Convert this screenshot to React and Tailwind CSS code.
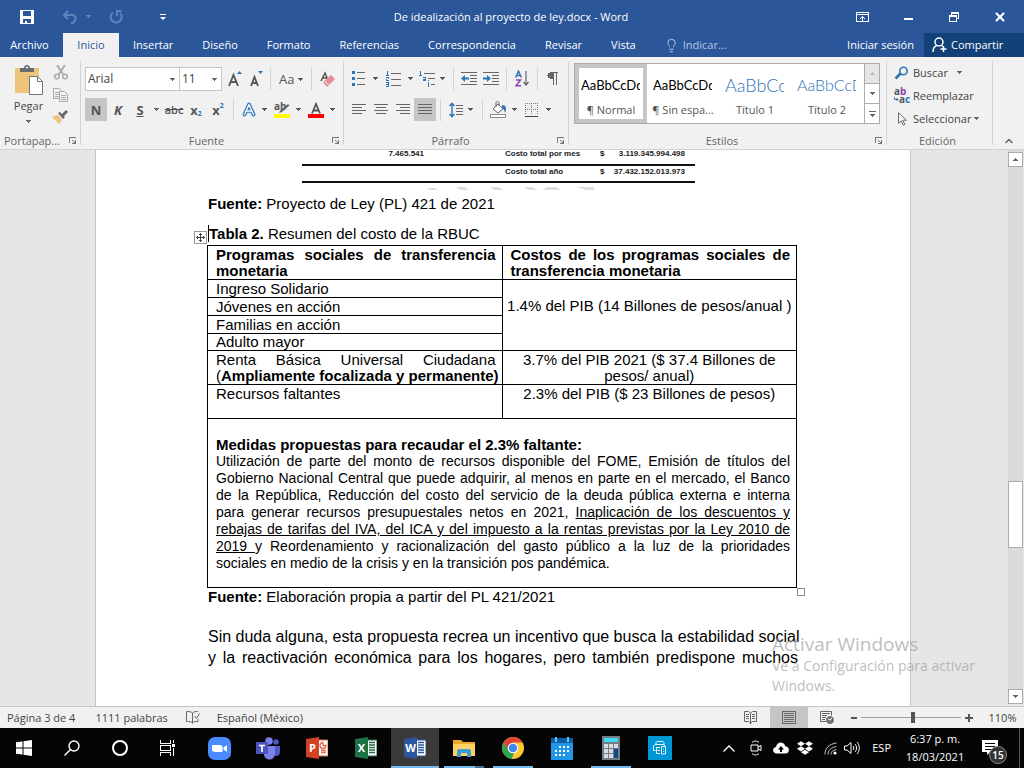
import { useState } from 'react';
import clsx from 'clsx';
import { ChevronUp, Lightbulb, X } from 'lucide-react';
import { SiDropbox } from 'react-icons/si';

const TABS = ['Insertar', 'Diseño', 'Formato', 'Referencias', 'Correspondencia', 'Revisar', 'Vista'];

const STYLES = [
  { sample: 'AaBbCcDd', name: '¶ Normal', cls: 'text-[13px] text-black' },
  { sample: 'AaBbCcDd', name: '¶ Sin espa...', cls: 'text-[13px] text-black' },
  { sample: 'AaBbCcD', name: 'Título 1', cls: 'text-[18px] font-light text-[#2e74b5]' },
  { sample: 'AaBbCcD', name: 'Título 2', cls: 'text-[16px] font-light text-[#2e74b5]' },
];

const Caret = ({ className = '' }) => (
  <svg width="5" height="3" viewBox="0 0 5 3" className={clsx('shrink-0', className)} shapeRendering="crispEdges">
    <path d="M0 0h5v1H4v1H3v1H2V2H1V1H0z" fill="currentColor" />
  </svg>
);

const Sep = ({ className = '' }) => <span className={clsx('h-[22px] w-px shrink-0 bg-[#d2d2d2]', className)} />;

const Tool = ({ label, className = '', active, children }) => (
  <button
    type="button"
    aria-label={label}
    className={clsx('flex h-[23px] shrink-0 items-center justify-center text-[#555]', active && 'bg-[#c5c5c5]', className)}
  >
    {children}
  </button>
);

const Group = ({ title, launcher = true, className = '', children }) => (
  <section className={clsx('my-1 flex shrink-0 flex-col border-r border-[#d2d2d2]', className)}>
    <div className="min-h-0 flex-1">{children}</div>
    <div className="flex h-[9px] items-center pr-1 text-[#666]">
      <span className={clsx('flex-1', title === 'Portapap...' ? 'pl-1' : 'text-center')}>{title}</span>
      {launcher && (
        <button type="button" aria-label={`Opciones de ${title}`}>
          <svg width="7" height="7" viewBox="0 0 7 7" shapeRendering="crispEdges" fill="#777">
            <path d="M0 0h7v1H1v5H0zM3 3h1v1h1v1h1V3h1v4H3V6h2V5H4V4H3z" />
          </svg>
        </button>
      )}
    </div>
  </section>
);

// rows: list of [x, width] pairs, drawn every `step` pixels
const Lines = ({ rows, step = 3 }) => (
  <svg width="14" height="12" viewBox="0 0 14 12" shapeRendering="crispEdges" fill="#666">
    {rows.map(([x, w], i) => (
      <rect key={i} x={x} y={i * step} width={w} height="1" />
    ))}
  </svg>
);

const Indent = ({ flip }) => (
  <svg width="16" height="13" viewBox="0 0 16 13">
    <path d="M0 .5h16M9 3.5h7M9 6.5h7M9 9.5h7M0 12.5h16" stroke="#666" shapeRendering="crispEdges" />
    <path
      d={flip ? 'M0 5.5h4V3l4 3.5L4 10V7.5H0z' : 'M8 5.5H4V3L0 6.5 4 10V7.5h4z'}
      fill="#2e75b6"
    />
  </svg>
);

const TitleBar = () => (
  <header className="flex h-[33px] shrink-0 items-center text-white">
    <div className="flex w-[183px] shrink-0 items-center pl-5">
      <button type="button" aria-label="Guardar">
        <svg width="14" height="14" viewBox="0 0 14 14" fill="#fff">
          <path d="M0 0h14v14H0zM3 1v5h8V1zM3 9v4h2v-2h2v2h4V9z" fillRule="evenodd" />
        </svg>
      </button>
      <button type="button" aria-label="Deshacer" className="ml-7 flex items-center text-[#5f83bd]">
        <svg width="16" height="14" viewBox="0 0 16 14" fill="none" stroke="currentColor" strokeWidth="2">
          <path d="M6 1L2 5l4 4M2 5h8c5 0 5 7-1 8" />
        </svg>
        <Caret className="ml-2" />
      </button>
      <button type="button" aria-label="Rehacer" className="ml-[18px] text-[#5f83bd]">
        <svg width="14" height="14" viewBox="0 0 14 14" fill="none" stroke="currentColor" strokeWidth="2">
          <path d="M4 2.5A5.5 5.5 0 1 0 11 3M12.5 1H8v5" />
        </svg>
      </button>
      <button type="button" aria-label="Personalizar" className="ml-[37px]">
        <svg width="6" height="6" viewBox="0 0 6 6" fill="#fff">
          <path d="M0 0h6v1H0zM0 3h6L3 6z" />
        </svg>
      </button>
    </div>
    <h1 className="flex-1 text-center">De idealización al proyecto de ley.docx - Word</h1>
    <div className="flex w-[185px] shrink-0 [&>button]:flex [&>button]:h-[30px] [&>button]:w-[46px] [&>button]:items-center [&>button]:justify-center">
      <button type="button" aria-label="Opciones de la cinta">
        <svg width="13" height="10" viewBox="0 0 13 10" fill="none" stroke="#fff" shapeRendering="crispEdges">
          <path d="M.5.5h12v9H.5zM1 2.5h11M6.5 4v5M4 6.5h1M5 5.5h1M7 5.5h1M8 6.5h1" />
        </svg>
      </button>
      <button type="button" aria-label="Minimizar">
        <span className="mt-1 h-[2px] w-[9px] bg-white" />
      </button>
      <button type="button" aria-label="Restaurar">
        <svg width="10" height="10" viewBox="0 0 10 10" fill="none" stroke="#fff" shapeRendering="crispEdges">
          <path d="M.5 3.5h7v6h-7zM0 4.5h7M2.5 3V.5h7v6H8M2 1.5h7" />
        </svg>
      </button>
      <button type="button" aria-label="Cerrar">
        <X size={14} strokeWidth={3.5} />
      </button>
    </div>
  </header>
);

const TabBar = () => (
  <nav className="flex h-6 shrink-0 text-white">
    <button type="button" className="w-[63px] pr-1">Archivo</button>
    <button type="button" className="w-14 bg-[#f1f1f1] text-[#2b579a]">Inicio</button>
    <div className="flex gap-px">
      {TABS.map((t) => (
        <button key={t} type="button" className="px-[14px]">{t}</button>
      ))}
    </div>
    <button type="button" className="ml-[14px] flex items-center gap-1 text-[#b5c7e3]">
      <Lightbulb size={15} strokeWidth={1.5} />
      Indicar...
    </button>
    <button type="button" className="mr-[10px] ml-auto">Iniciar sesión</button>
    <button type="button" className="flex w-[100px] items-center gap-1 bg-[#124078] pl-2">
      <svg width="15" height="16" viewBox="0 0 15 16" fill="none" stroke="#fff" strokeWidth="1.5">
        <circle cx="7" cy="5" r="4" />
        <path d="M1 15c0-4 2-6 4-6.5M9.5 8.5l1.5 1M11.5 9v6M8.5 12h6" />
      </svg>
      Compartir
    </button>
  </nav>
);

const Clipboard = () => (
  <Group title="Portapap..." className="w-[81px]">
    <div className="flex pt-1">
      <button type="button" className="flex w-[45px] flex-col items-center pl-3 text-[#444]">
        <svg width="30" height="31" viewBox="0 0 30 31">
          <path d="M1 3h24v25H1z" fill="#ecc57b" />
          <path d="M6 3h4c0-4 6-4 6 0h4v4H6z" fill="#6b6b6b" />
          <circle cx="13" cy="2.5" r="1" fill="#fff" />
          <path d="M15.500 11.5h8l5 5v13h-13z" fill="#fff" stroke="#777" />
          <path d="M23.5 11.5v5h5" fill="none" stroke="#777" />
        </svg>
        <span className="mt-[2px]">Pegar</span>
        <Caret className="mt-[6px] text-[#666]" />
      </button>
      <div className="flex flex-1 flex-col items-end gap-2 pr-3">
        <button type="button" aria-label="Cortar">
          <svg width="14" height="15" viewBox="0 0 14 15" fill="none" stroke="#aaa" strokeWidth="1.5">
            <path d="M3 0l6 9M11 0L5 9" strokeWidth="2" />
            <circle cx="3" cy="11.5" r="2.3" />
            <circle cx="11" cy="11.5" r="2.3" />
          </svg>
        </button>
        <button type="button" aria-label="Copiar">
          <svg width="15" height="14" viewBox="0 0 15 14" fill="#f1f1f1" stroke="#aaa">
            <path d="M.5.5h6l2 2v8h-8zM2 4.5h4M2 6.5h4M2 8.5h4" />
            <path d="M6.5 3.5h5l3 3v7h-8zM8 7.5h5M8 9.5h5M8 11.5h5" />
          </svg>
        </button>
        <button type="button" aria-label="Copiar formato">
          <svg width="16" height="14" viewBox="0 0 16 14">
            <path d="M0 7l6-2 4 5-3 4z" fill="#ecc57b" />
            <path d="M6 3l2-1 5 5-2 2zM10 4l4-4 2 2-4 4z" fill="#666" />
          </svg>
        </button>
      </div>
    </div>
  </Group>
);

const Combo = ({ label, value, options, className }) => (
  <label className={clsx('relative block h-6 border border-[#c6c6c6] bg-white', className)}>
    <select aria-label={label} defaultValue={value} className="h-full w-full appearance-none pl-[2px] text-[12px] text-[#444] outline-none">
      {options.map((o) => (
        <option key={o}>{o}</option>
      ))}
    </select>
    <Caret className="pointer-events-none absolute top-[10px] right-1 text-[#666]" />
  </label>
);

const FontGroup = () => (
  <Group title="Fuente" className="w-[263px]">
    <div className="flex items-center pt-[6px] pl-1">
      <Combo label="Fuente" value="Arial" options={['Arial', 'Calibri']} className="w-[95px]" />
      <Combo label="Tamaño" value="11" options={['10', '11', '12']} className="-ml-px w-[43px]" />
      <Tool label="Aumentar tamaño" className="ml-[6px] w-[14px]">
        <svg width="14" height="16" viewBox="0 0 14 16">
          <path d="M1 15L5.5 4 10 15M2.500 11h6" fill="none" stroke="#555" strokeWidth="1.8" />
          <path d="M9 3h5L11.5 0z" fill="#2e75b6" />
        </svg>
      </Tool>
      <Tool label="Reducir tamaño" className="ml-2 w-[14px]">
        <svg width="14" height="16" viewBox="0 0 14 16">
          <path d="M1 15L4.5 6 8 15M2.5 12h4" fill="none" stroke="#555" strokeWidth="1.8" />
          <path d="M8 0h5l-2.500 3z" fill="#2e75b6" />
        </svg>
      </Tool>
      <Sep className="ml-[6px]" />
      <Tool label="Cambiar mayúsculas" className="ml-2 gap-1">
        <span className="text-[13px]">Aa</span>
        <Caret />
      </Tool>
      <Sep className="ml-2" />
      <Tool label="Borrar formato" className="ml-2 w-4">
        <svg width="16" height="17" viewBox="0 0 16 17">
          <path d="M1 10L5 2l3 7M2.5 7h5" fill="none" stroke="#555" strokeWidth="1.5" />
          <path d="M3 11L11 4l4 4-8 8z" fill="#e8899a" />
          <path d="M4.5 9.5l4 4.5" stroke="#f1f1f1" />
        </svg>
      </Tool>
    </div>
    <div className="flex items-center pt-[7px] pl-1">
      <Tool label="Negrita" active className="w-[22px] text-[13px] font-bold">N</Tool>
      <Tool label="Cursiva" className="w-[22px] text-[13px] font-bold italic">K</Tool>
      <Tool label="Subrayado" className="w-[22px] text-[13px] font-bold underline">S</Tool>
      <Caret className="ml-[3px] text-[#666]" />
      <Tool label="Tachado" className="ml-[6px] w-[18px] font-semibold line-through">abc</Tool>
      <Tool label="Subíndice" className="ml-[3px] w-[20px] text-[13px] font-bold">
        x<span className="mt-2 text-[7px] text-[#2e75b6]">2</span>
      </Tool>
      <Tool label="Superíndice" className="ml-[2px] w-[20px] text-[13px] font-bold">
        x<span className="mb-2 text-[7px] text-[#2e75b6]">2</span>
      </Tool>
      <Sep className="ml-[5px]" />
      <Tool label="Efectos de texto" className="ml-2 gap-[6px]">
        <svg width="14" height="15" viewBox="0 0 14 15" fill="none" strokeLinejoin="round" strokeLinecap="round">
          <path d="M2.500 12.5L7 2.5l4.500 10M4.500 9h5" stroke="#9cc3e8" strokeWidth="4.500" />
          <path d="M2.500 12.5L7 2.5l4.500 10M4.500 9h5" stroke="#2e75b6" strokeWidth="3.2" />
          <path d="M2.500 12.5L7 2.5l4.500 10M4.500 9h5" stroke="#fff" strokeWidth="1.3" />
        </svg>
        <Caret />
      </Tool>
      <Tool label="Color de resaltado" className="ml-[7px] gap-[6px]">
        <svg width="16" height="16" viewBox="0 0 16 16" className="overflow-visible">
          <text x="0" y="8" fontSize="10" fontWeight="700" fill="#555" fontFamily="Open Sans, sans-serif">ab</text>
          <path d="M14 2l1.500 1.500L8 10l-3 1 1.500-3z" fill="#666" />
          <path d="M0 12h16v4H0z" fill="#ff0" />
        </svg>
        <Caret />
      </Tool>
      <Tool label="Color de fuente" className="ml-[7px] gap-[6px]">
        <svg width="16" height="16" viewBox="0 0 16 16">
          <path d="M4 11.5L8 2l4 9.5M5.500 8.500h5" fill="none" stroke="#555" strokeWidth="1.8" />
          <path d="M0 12h16v4H0z" fill="#f00" />
        </svg>
        <Caret />
      </Tool>
    </div>
  </Group>
);

const ParagraphGroup = () => (
  <Group title="Párrafo" className="w-[225px]">
    <div className="flex items-center pt-[6px] pl-2">
      <Tool label="Viñetas" className="gap-2">
        <svg width="13" height="15" viewBox="0 0 13 15" shapeRendering="crispEdges">
          <path d="M0 0h3v3H0zM0 6h3v3H0zM0 12h3v3H0z" fill="#2e75b6" />
          <path d="M5 1h8v1H5zM5 7h8v1H5zM5 13h8v1H5z" fill="#666" />
        </svg>
        <Caret />
      </Tool>
      <Tool label="Numeración" className="ml-2 gap-[7px]">
        <svg width="15" height="16" viewBox="0 0 15 16" shapeRendering="crispEdges">
          <path d="M1 0h1v4h1v1H0V4h1V1H0zM0 6h3v2H1v1h2v1H0V8h2V7H0zM0 11h3v5H0v-1h2v-1H0v-1h2v-1H0z" fill="#2e75b6" />
          <path d="M5 2h10v1H5zM5 8h10v1H5zM5 14h10v1H5z" fill="#666" />
        </svg>
        <Caret />
      </Tool>
      <Tool label="Lista multinivel" className="ml-[6px] gap-1">
        <svg width="17" height="16" viewBox="0 0 17 16" shapeRendering="crispEdges">
          <path d="M1 0h1v4h1v1H0V4h1V1H0zM4 6h3v4H4V8h2V7H4zM9 9h1v1H9zM9 11h1v5H9z" fill="#2e75b6" />
          <path d="M5 2h11v1H5zM9 7h7v1H9zM12 13h4v1h-4z" fill="#666" />
        </svg>
        <Caret />
      </Tool>
      <Sep className="ml-2" />
      <Tool label="Disminuir sangría" className="ml-[7px]"><Indent /></Tool>
      <Tool label="Aumentar sangría" className="ml-[6px]"><Indent flip /></Tool>
      <Sep className="ml-[7px]" />
      <Tool label="Ordenar" className="ml-2">
        <svg width="14" height="17" viewBox="0 0 14 17" fill="none" strokeWidth="1.5">
          <path d="M.7 7.5L3.5 1l2.800 6.500M1.800 5.500h3.400" stroke="#2e75b6" />
          <path d="M1 10h4.500L1 15.700h5" stroke="#8e44ad" />
          <path d="M11 1v13M8.500 12l2.500 3 2.500-3" stroke="#666" strokeWidth="1.2" />
        </svg>
      </Tool>
      <Sep className="ml-2" />
      <Tool label="Mostrar todo" className="ml-[9px]">
        <svg width="11" height="13" viewBox="0 0 11 13" shapeRendering="crispEdges">
          <path d="M4 0h7v1h-1v12H9V1H7v12H6V7H4C-1 7-1 0 4 0z" fill="#666" />
        </svg>
      </Tool>
    </div>
    <div className="flex items-center pt-2 pl-1">
      <Tool label="Alinear a la izquierda" className="w-[22px]"><Lines rows={[[0, 14], [0, 10], [0, 14], [0, 10]]} /></Tool>
      <Tool label="Centrar" className="w-[22px]"><Lines rows={[[0, 14], [2, 10], [0, 14], [2, 10]]} /></Tool>
      <Tool label="Alinear a la derecha" className="w-[22px]"><Lines rows={[[0, 14], [4, 10], [0, 14], [4, 10]]} /></Tool>
      <Tool label="Justificar" active className="w-[22px]"><Lines rows={[[0, 14], [0, 14], [0, 14], [0, 14]]} /></Tool>
      <Sep className="ml-1" />
      <Tool label="Interlineado" className="ml-2 gap-1">
        <svg width="15" height="16" viewBox="0 0 15 16">
          <path d="M3 1v14M.5 4L3 1.200 5.500 4M.5 12L3 14.800 5.500 12" fill="none" stroke="#2e75b6" strokeWidth="1.4" />
          <path d="M7 3h7v1H7zM7 6h7v1H7zM7 9h7v1H7zM7 12h7v1H7z" fill="#666" shapeRendering="crispEdges" />
        </svg>
        <Caret />
      </Tool>
      <Sep className="ml-[9px]" />
      <Tool label="Sombreado" className="ml-[7px] gap-[5px]">
        <svg width="17" height="17" viewBox="0 0 17 17">
          <path d="M8 3l5 5-5 4-5-4z" fill="#fff" stroke="#666" />
          <path d="M6 6V2c0-2 3-2 3 0v3" fill="none" stroke="#666" />
          <path d="M12 4c4 0 5 3 3 8-1-3-1-4-3-5z" fill="#2e75b6" />
          <path d="M.5 13.500h15v3H.5z" fill="#fff" stroke="#888" />
        </svg>
        <Caret />
      </Tool>
      <Tool label="Bordes" className="ml-2 gap-2">
        <svg width="13" height="14" viewBox="0 0 13 14" shapeRendering="crispEdges">
          <path d="M0 .5h13M0 6.500h13M.5 0v12M6.500 0v12M12.500 0v12" stroke="#777" strokeDasharray="1 1" />
          <path d="M0 13h13v1H0z" fill="#444" />
        </svg>
        <Caret />
      </Tool>
    </div>
  </Group>
);

const StylesGroup = () => {
  const [selected, setSelected] = useState(0);
  return (
    <Group title="Estilos" className="w-[318px]">
      <div className="mt-[2px] ml-[5px] flex h-[61px] w-[306px] border border-[#ababab] bg-white">
        {STYLES.map((s, i) => (
          <button
            key={s.name}
            type="button"
            onClick={() => setSelected(i)}
            className={clsx('flex w-[72px] flex-col border-4 text-[#555]', i === selected ? 'border-[#c6c6c6]' : 'border-transparent')}
          >
            <span className={clsx("flex h-[34px] w-[61px] items-center overflow-hidden pl-[2px] font-['Lato',sans-serif]", s.cls)}>
              {s.sample}
            </span>
            <span className="w-full text-center whitespace-nowrap">{s.name}</span>
          </button>
        ))}
        <div className="ml-auto flex w-[15px] flex-col border-l border-[#ababab] text-[#666] [&>button]:flex [&>button]:flex-1 [&>button]:items-center [&>button]:justify-center">
          <button type="button" aria-label="Estilos anteriores" className="bg-[#e5e5e5] text-[#bbb]">
            <Caret className="rotate-180" />
          </button>
          <button type="button" aria-label="Estilos siguientes" className="border-y border-[#ababab]">
            <Caret />
          </button>
          <button type="button" aria-label="Más estilos" className="flex-col gap-[2px]">
            <span className="h-px w-[7px] bg-[#666]" />
            <Caret />
          </button>
        </div>
      </div>
    </Group>
  );
};

const EditGroup = () => (
  <Group title="Edición" launcher={false} className="w-[106px] text-[#444]">
    <div className="flex flex-col pl-[7px] [&>button]:flex [&>button]:h-[23px] [&>button]:items-center [&>button]:gap-[3px]">
      <button type="button">
        <svg width="16" height="14" viewBox="0 0 16 14" fill="none" stroke="#2e75b6">
          <circle cx="9.5" cy="5" r="3.7" strokeWidth="1.6" />
          <path d="M6.5 7.5L1.5 12.5" strokeWidth="2.6" />
        </svg>
        Buscar
        <Caret className="ml-[6px] text-[#666]" />
      </button>
      <button type="button">
        <svg width="16" height="18" viewBox="0 0 16 18" fontSize="10" fontWeight="700" fontFamily="Open Sans, sans-serif" aria-hidden="true">
          <text x="0" y="8" fill="#555">a<tspan fill="#8e44ad">b</tspan></text>
          <text x="5" y="16" fill="#555">a<tspan fill="#2e75b6">c</tspan></text>
          <path d="M.5 10v2.500H4M2.500 11L4 12.500 2.500 14" fill="none" stroke="#2e75b6" />
        </svg>
        Reemplazar
      </button>
      <button type="button">
        <svg width="16" height="14" viewBox="0 0 16 14" fill="#fff" stroke="#666">
          <path d="M4.5.8v10.500l2.700-2.500 2 4.400 1.600-.8-2-4.200h3.500z" />
        </svg>
        Seleccionar
        <Caret className="text-[#666]" />
      </button>
    </div>
  </Group>
);

const Ribbon = () => (
  <div className="flex h-[93px] shrink-0 overflow-hidden border-b border-[#d2d2d2] bg-[#f1f1f1]">
    <Clipboard />
    <FontGroup />
    <ParagraphGroup />
    <StylesGroup />
    <EditGroup />
    <button type="button" aria-label="Contraer la cinta" className="mt-auto ml-auto mr-[9px] mb-[2px] text-[#666]">
      <ChevronUp size={12} strokeWidth={3} />
    </button>
  </div>
);

// A full line of justified text
const J = ({ children, className = '' }) => (
  <span className={clsx('block whitespace-nowrap [text-align-last:justify]', className)}>{children}</span>
);

const CostTable = () => (
  <table className="w-[590px] table-fixed border-collapse text-[15px] leading-[17px] [&_td]:border [&_td]:border-black [&_td]:align-top [&_th]:border [&_th]:border-black [&_th]:pt-px [&_th]:pr-[6px] [&_th]:pl-2 [&_th]:text-left [&_th]:leading-4">
    <thead>
      <tr>
        <th><J>Programas sociales de transferencia</J>monetaria</th>
        <th><J>Costos de los programas sociales de</J>transferencia monetaria</th>
      </tr>
    </thead>
    <tbody>
      <tr>
        <td className="px-2">Ingreso Solidario</td>
        <td rowSpan={4} className="pt-[17px] text-center whitespace-nowrap">1.4% del PIB (14 Billones de pesos/anual )</td>
      </tr>
      <tr><td className="px-2">Jóvenes en acción</td></tr>
      <tr><td className="px-2">Familias en acción</td></tr>
      <tr className="leading-4"><td className="px-2">Adulto mayor</td></tr>
      <tr className="leading-4">
        <td className="pt-px pr-[6px] pl-2 whitespace-nowrap">
          <J>Renta Básica Universal Ciudadana</J>
          (<b>Ampliamente focalizada y permanente)</b>
        </td>
        <td className="pt-px text-center">3.7% del PIB 2021 ($ 37.4 Billones de<br />pesos/ anual)</td>
      </tr>
      <tr>
        <td className="px-2 pb-4">Recursos faltantes</td>
        <td className="text-center">2.3% del PIB ($ 23 Billones de pesos)</td>
      </tr>
      <tr>
        <td colSpan={2} className="pt-[17px] pr-[6px] pb-[15px] pl-2">
          <b className="block">Medidas propuestas para recaudar el 2.3% faltante:</b>
          <div className="text-[14px]">
            <J>Utilización de parte del monto de recursos disponible del FOME, Emisión de títulos del</J>
            <J>Gobierno Nacional Central que puede adquirir, al menos en parte en el mercado, el Banco</J>
            <J>de la República, Reducción del costo del servicio de la deuda pública externa e interna</J>
            <J>para generar recursos presupuestales netos en 2021, <u>Inaplicación de los descuentos y</u></J>
            <J className="underline">rebajas de tarifas del IVA, del ICA y del impuesto a la rentas previstas por la Ley 2010 de</J>
            <J><u>2019 </u>y Reordenamiento y racionalización del gasto público a la luz de la prioridades</J>
            sociales en medio de la crisis y en la transición pos pandémica.
          </div>
        </td>
      </tr>
    </tbody>
  </table>
);

const Page = () => (
  <article className="h-full w-[816px] shrink-0 border-x border-[#c6c6c6] bg-white px-[112px] font-['Liberation_Sans',Arial,sans-serif] text-[15px] text-black">
    <div className="ml-[94px] w-[393px] text-[8px] font-bold text-[#222]">
      <div className="flex h-[16px] items-center border-b-2 border-[#111] pb-[6px]">
        <span className="w-[122px] text-right">7.465.541</span>
        <span className="flex-1 pl-[81px]">Costo total por mes</span>
        <span className="flex w-[85px] justify-between">$<span>3.119.345.994.498</span></span>
        <span className="w-[10px]" />
      </div>
      <div className="mt-px flex h-[16px] items-center border-b-2 border-[#111] pb-[5px]">
        <span className="w-[122px]" />
        <span className="flex-1 pl-[81px]">Costo total año</span>
        <span className="flex w-[85px] justify-between">$<span>37.432.152.013.973</span></span>
        <span className="w-[10px]" />
      </div>
      <svg width="170" height="3" viewBox="0 0 170 3" className="mt-1 ml-[122px]" fill="#dedede">
        <path d="M2 3l4-2h5l3 2zM32 0h9l4 3h-9zM66 0h9l4 3h-9zM100 0h9l4 3h-9zM118 3l5-3h9l4 3zM152 0h18v3h-8z" />
      </svg>
    </div>
    <p className="mt-[6px] leading-4"><b>Fuente:</b> Proyecto de Ley (PL) 421 de 2021</p>
    <div className="relative mt-[13px]">
      <p className="border-l border-black leading-[17px]"><b>Tabla 2.</b> Resumen del costo de la RBUC</p>
      <span className="absolute top-[6px] -left-[14px] flex size-[13px] items-center justify-center border border-[#999] bg-white">
        <svg width="9" height="9" viewBox="0 0 9 9" fill="none" stroke="#444">
          <path d="M4.5 0v9M0 4.5h9M3 1.5h3M3 7.5h3M1.5 3v3M7.5 3v3" shapeRendering="crispEdges" />
        </svg>
      </span>
      <div className="-ml-px pt-[3px]"><CostTable /></div>
      <span className="absolute -right-[7px] -bottom-2 size-2 border border-[#888] bg-white" />
    </div>
    <p className="leading-[18px]"><b>Fuente:</b> Elaboración propia a partir del PL 421/2021</p>
    <p className="mt-5 text-[16px] leading-[21px]">
      <J>Sin duda alguna, esta propuesta recrea un incentivo que busca la estabilidad social</J>
      <J>y la reactivación económica para los hogares, pero también predispone muchos</J>
    </p>
  </article>
);

const ScrollBar = () => (
  <div className="flex w-[18px] shrink-0 flex-col items-center bg-[#e6e6e6] pb-[2px] pl-px text-[#666]">
    <div className="flex w-[15px] flex-1 flex-col bg-[#dadada]">
      <button type="button" aria-label="Subir" className="mt-[2px] flex h-[15px] items-center justify-center border border-[#ababab] bg-white">
        <Caret className="rotate-180" />
      </button>
      <span className="flex-[315]" />
      <span className="h-[67px] border border-[#ababab] bg-white" />
      <span className="flex-[141]" />
      <button type="button" aria-label="Bajar" className="flex h-[15px] items-center justify-center border border-[#ababab] bg-white">
        <Caret />
      </button>
    </div>
  </div>
);

const StatusBar = () => (
  <footer className="flex h-[22px] shrink-0 items-center border-t border-[#c6c6c6] bg-[#f1f1f1] pl-[7px] text-[#444]">
    <span>Página 3 de 4</span>
    <span className="ml-5">1111 palabras</span>
    <button type="button" aria-label="Revisión" className="ml-[18px]">
      <svg width="14" height="13" viewBox="0 0 14 13" fill="none" stroke="#666">
        <path d="M6.5 2v10.500M6.5 2C5 .5 3 .5.5.5v10c2.500 0 4.500 0 6 1.500 1-1.500 3-1.500 5.500-1.500V8M6.500 2C8 .5 10 .5 12 .5M8.500 5l2 2.500 3-5" />
      </svg>
    </button>
    <span className="ml-[17px]">Español (México)</span>
    <button type="button" aria-label="Modo de lectura" className="ml-auto">
      <svg width="13" height="13" viewBox="0 0 13 13" fill="none" stroke="#666">
        <path d="M6.5 2v11M.5.5h4l2 1.500 2-1.500h4v10h-4l-2 1.500-2-1.500h-4zM2 3.500h3M2 5.500h3M2 7.500h3M8 3.500h3M8 5.500h3M8 7.500h3" />
      </svg>
    </button>
    <button type="button" aria-label="Diseño de impresión" className="ml-[13px] flex h-full w-[38px] items-center justify-center bg-[#c5c5c5]">
      <svg width="14" height="13" viewBox="0 0 14 13" fill="none" stroke="#666" shapeRendering="crispEdges">
        <path d="M.5.5h13v12H.5zM2 2.500h10M2 4.500h10M2 6.500h10M2 8.500h10M2 10.500h10" />
      </svg>
    </button>
    <button type="button" aria-label="Diseño web" className="ml-3">
      <svg width="14" height="13" viewBox="0 0 14 13" fill="none" stroke="#666">
        <path d="M6 10.500H.5V.5h11v4M2 2.500h8M2 4.500h5M2 6.500h4M2 8.500h3" />
        <circle cx="10" cy="9" r="3.5" fill="#777" />
        <path d="M8 8l2 1 2-2" stroke="#f1f1f1" />
      </svg>
    </button>
    <button type="button" aria-label="Alejar" className="ml-[17px] h-[2px] w-[6px] bg-[#555]" />
    <input
      type="range"
      aria-label="Zoom"
      min="0"
      max="100"
      defaultValue="52"
      className="mx-1 h-3 w-[100px] appearance-none bg-[linear-gradient(#a0a0a0,#a0a0a0)] bg-[length:100%_1px] bg-center bg-no-repeat [&::-webkit-slider-thumb]:h-[11px] [&::-webkit-slider-thumb]:w-1 [&::-webkit-slider-thumb]:appearance-none [&::-webkit-slider-thumb]:bg-[#555]"
    />
    <button type="button" aria-label="Acercar">
      <svg width="8" height="8" viewBox="0 0 8 8"><path d="M4 0v8M0 4h8" stroke="#555" strokeWidth="2" /></svg>
    </button>
    <button type="button" className="w-[51px] pl-2 text-center">110%</button>
  </footer>
);

const OfficeIcon = ({ letter, dark, light }) => (
  <svg width="22" height="22" viewBox="0 0 22 22">
    <path d="M11 3h11v16H11z" fill="#fff" stroke={light} />
    {letter === 'P' ? (
      <path d="M17 5.500a3 3 0 1 0 3 3h-3zM15 13.500h5M15 15.500h5" fill="none" stroke={light} strokeWidth="1.3" />
    ) : (
      <path d="M14 5.500h6M14 8h6M14 10.500h6M14 13h6M14 15.500h6" stroke={light} strokeWidth="1.3" />
    )}
    <path d="M0 2l13-2v22L0 20z" fill={dark} />
    <text x="6.5" y="15" textAnchor="middle" fontSize="11" fontWeight="700" fill="#fff" fontFamily="Open Sans, sans-serif">{letter}</text>
  </svg>
);

const APPS = [
  {
    name: 'Zoom',
    icon: (
      <svg width="23" height="23" viewBox="0 0 23 23">
        <rect width="23" height="23" rx="7" fill="#4a8cff" />
        <path d="M4 8h8c2 0 2.500 1 2.500 2.500V15H7c-2 0-3-1-3-2.500zM15.500 10.500L19 8v7l-3.500-2.500z" fill="#fff" />
      </svg>
    ),
  },
  {
    name: 'Teams',
    icon: (
      <svg width="24" height="23" viewBox="0 0 24 23">
        <circle cx="20" cy="5" r="2.7" fill="#5059c9" />
        <path d="M17 9h7v6c0 4-4 5-7 3z" fill="#5059c9" />
        <circle cx="13" cy="4" r="3.8" fill="#7b83eb" />
        <path d="M8 9h11v7c0 4-2 6.500-5.500 6.500S8 20 8 17z" fill="#7b83eb" />
        <path d="M0 5h12v12H0z" fill="#4b53bc" />
        <path d="M3 8.500h6M6 8v7" stroke="#fff" strokeWidth="1.7" />
      </svg>
    ),
  },
  { name: 'PowerPoint', icon: <OfficeIcon letter="P" dark="#d04423" light="#e0694c" /> },
  { name: 'Excel', icon: <OfficeIcon letter="X" dark="#1f7145" light="#1f7145" /> },
  { name: 'Word', active: true, icon: <OfficeIcon letter="W" dark="#2b579a" light="#2b579a" /> },
  {
    name: 'Explorador',
    open: true,
    stacked: true,
    icon: (
      <svg width="22" height="19" viewBox="0 0 22 19">
        <path d="M0 1h8l2 2h12v14H0z" fill="#e8a92c" />
        <path d="M0 5h22v12H0z" fill="#fbd365" />
        <path d="M4 18v-6c0-1 1-2 2-2h10c1 0 2 1 2 2v6h-4v-4H8v4z" fill="#3f9bd8" />
      </svg>
    ),
  },
  {
    name: 'Chrome',
    open: true,
    icon: (
      <svg width="22" height="22" viewBox="0 0 22 22">
        <circle cx="11" cy="11" r="11" fill="#fcc934" />
        <path d="M1.5 5.5A11 11 0 0 1 20.5 5.5H11L6 13.5z" fill="#e04335" />
        <path d="M1.5 5.5l5 8 5.500 3-2.500 5.400A11 11 0 0 1 1.5 5.5z" fill="#2da44e" />
        <circle cx="11" cy="11" r="5.3" fill="#fff" />
        <circle cx="11" cy="11" r="4.2" fill="#4285f4" />
      </svg>
    ),
  },
  {
    name: 'Calendario',
    icon: (
      <svg width="22" height="23" viewBox="0 0 22 23" shapeRendering="crispEdges">
        <path d="M0 1h22v22H0z" fill="#2199e8" />
        <path d="M0 1h22v5H0z" fill="#0e5fa8" />
        <path d="M4 0h2v5H4zM16 0h2v5h-2z" fill="#59c6f5" />
        <path d="M8 10h10M4 14h14M4 18h10" stroke="#fff" strokeWidth="2" strokeDasharray="2 2" />
      </svg>
    ),
  },
  {
    name: 'Calculadora',
    open: true,
    icon: (
      <svg width="18" height="24" viewBox="0 0 18 24">
        <path d="M0 0h18v24H0z" fill="#737b84" />
        <path d="M2 2h14v4H2z" fill="#3fd8f5" />
        <path d="M2 8h4v4H2zM7 8h4v4H7zM12 8h4v4h-4zM2 13h4v4H2zM7 13h4v4H7zM2 18h4v4H2zM7 18h4v4H7z" fill="#d8dce0" />
        <path d="M12 13h4v9h-4z" fill="#0f4a86" />
      </svg>
    ),
  },
  {
    name: 'Impresora',
    icon: (
      <svg width="24" height="24" viewBox="0 0 24 24" fill="none" stroke="#fff">
        <path d="M0 0h24v24H0z" fill="#0096d6" stroke="none" />
        <path d="M8 8.500V6.500L9 5.500h5.500l1.500 1v2M7.500 14.500H5.500V10L7 8.500h9l1 1.500M8 11.500h4M8.500 12v5.500H12M9.500 14.500H12M13.500 10.500h4v7.500h-4zM15 13h1M15 15.500h1" strokeWidth=".9" />
      </svg>
    ),
  },
];

const TaskBar = () => (
  <div className="flex h-10 shrink-0 bg-[#050505] text-white">
    <div className="flex [&>button]:flex [&>button]:w-12 [&>button]:items-center [&>button]:justify-center">
      <button type="button" aria-label="Inicio">
        <svg width="16" height="16" viewBox="0 0 16 16" fill="#fff">
          <path d="M0 2.300L6.500 1.400V7.500H0zM7.500 1.200L16 0v7.500H7.500zM0 8.500h6.500v6.100L0 13.700zM7.500 8.500H16V16l-8.500-1.200z" />
        </svg>
      </button>
      <button type="button" aria-label="Buscar">
        <svg width="16" height="16" viewBox="0 0 16 16" fill="none" stroke="#fff" strokeWidth="1.4">
          <circle cx="10" cy="6" r="5" />
          <path d="M6.5 9.5L.5 15.5" />
        </svg>
      </button>
      <button type="button" aria-label="Cortana">
        <span className="size-4 rounded-full border-2 border-white" />
      </button>
      <button type="button" aria-label="Vista de tareas">
        <svg width="16" height="16" viewBox="0 0 16 16" fill="none" stroke="#fff" shapeRendering="crispEdges">
          <path d="M.5 0v3.500h10V0M.5 5.500h10v5H.5zM.5 16v-3.500h10V16M13.500 0v3M13.500 8v8" />
          <path d="M12 4h3v3h-3z" fill="#fff" stroke="none" />
        </svg>
      </button>
    </div>
    <div className="ml-[3px] flex gap-px">
      {APPS.map((a) => (
        <button
          key={a.name}
          type="button"
          aria-label={a.name}
          className={clsx('relative flex w-12 items-center justify-center', a.active && 'bg-[#3a3a3a]')}
        >
          {a.icon}
          {a.active && <span className="absolute inset-x-0 bottom-0 h-[2px] bg-[#76b9ed]" />}
          {a.open && <span className={clsx('absolute inset-x-1 bottom-0 h-[2px] bg-[#76b9ed]', a.stacked && 'border-r-9 border-[#456f90]')} />}
        </button>
      ))}
    </div>
    <div className="ml-auto flex items-center">
      <button type="button" aria-label="Iconos ocultos" className="flex w-6 justify-center pr-3">
        <svg width="12" height="7" viewBox="0 0 12 7" fill="none" stroke="#fff" strokeWidth="1.3" className="shrink-0"><path d="M.5 6.5L6 1l5.500 5.500" /></svg>
      </button>
      <button type="button" aria-label="Reunirse ahora" className="flex w-[18px] justify-center">
        <svg width="12" height="16" viewBox="0 0 12 16" fill="none" stroke="#fff">
          <path d="M2 2.500C4 .5 7 .5 9 2.500M2 13.500c2 2 5 2 7 0M1 5h7v6H1zM8 7l3-1.500v5L8 9" />
        </svg>
      </button>
      <button type="button" aria-label="Copia de seguridad" className="ml-1 flex w-6 justify-center">
        <svg width="16" height="12" viewBox="0 0 16 12">
          <path d="M4 11.500C-1 11.500-1 5.500 3 5 4-1 11-1 12.500 4.500c4.500 0 4.500 7 0 7z" fill="#fff" />
          <path d="M8 4l3 3.500H9v2.500H7V7.500H5z" fill="#000" />
        </svg>
      </button>
      <button type="button" aria-label="Dropbox" className="flex w-6 justify-center"><SiDropbox size={16} /></button>
      <button type="button" aria-label="Red" className="ml-px flex w-6 justify-center">
        <svg width="13" height="13" viewBox="0 0 13 13" fill="none" stroke="#fff">
          <path d="M1 12.500C1 6 5 2 12.500 1M4 12.500c0-4 3-7 8.500-8M7 12.500c0-3 2-4.500 5.500-5" opacity=".75" />
          <circle cx="11" cy="11" r="1.6" fill="#fff" stroke="none" />
        </svg>
      </button>
      <button type="button" aria-label="Volumen" className="mr-[6px] flex w-6 pl-[2px]">
        <svg width="17" height="14" viewBox="0 0 17 14" fill="none" stroke="#fff">
          <path d="M.5 5h2.500l4-3.500v11L3 9H.5zM9 5c1 1 1 3 0 4M11 3c2 2 2 6 0 8M13 1c3 3 3 9 0 12" />
        </svg>
      </button>
      <button type="button">ESP</button>
      <button type="button" className="w-[88px] leading-[18px]">6:37 p. m.<br />18/03/2021</button>
      <button type="button" aria-label="Notificaciones" className="relative ml-[3px] h-10 w-[37px]">
        <svg width="16" height="15" viewBox="0 0 16 15" className="absolute top-3 left-0">
          <path d="M0 0h16v12H8l-3 3v-3H0z" fill="#fff" />
          <path d="M3 3.500h10M3 6.500h10M3 9.500h6" stroke="#000" />
        </svg>
        <span className="absolute top-[18px] left-[7px] flex size-[18px] items-center justify-center rounded-full border border-[#888] bg-[#333] text-[10px] font-semibold">15</span>
      </button>
      <span className="mr-1 h-full w-px bg-[#555]" />
    </div>
  </div>
);

export default function App() {
  return (
    <div className="flex h-screen flex-col overflow-hidden bg-[#2b579a] font-['Open_Sans',sans-serif] text-[11px] leading-4">
      <TitleBar />
      <TabBar />
      <Ribbon />
      <main className="relative flex min-h-0 flex-1 bg-[#e6e6e6]">
        <div className="flex min-w-0 flex-1 justify-center overflow-hidden">
          <Page />
        </div>
        <ScrollBar />
        <aside className="pointer-events-none absolute right-0 bottom-[10px] w-[252px] text-[14px] leading-5 text-[#a0a0a0]/70">
          <p className="text-[19px] leading-6">Activar Windows</p>
          <p>Ve a Configuración para activar Windows.</p>
        </aside>
      </main>
      <StatusBar />
      <TaskBar />
    </div>
  );
}
